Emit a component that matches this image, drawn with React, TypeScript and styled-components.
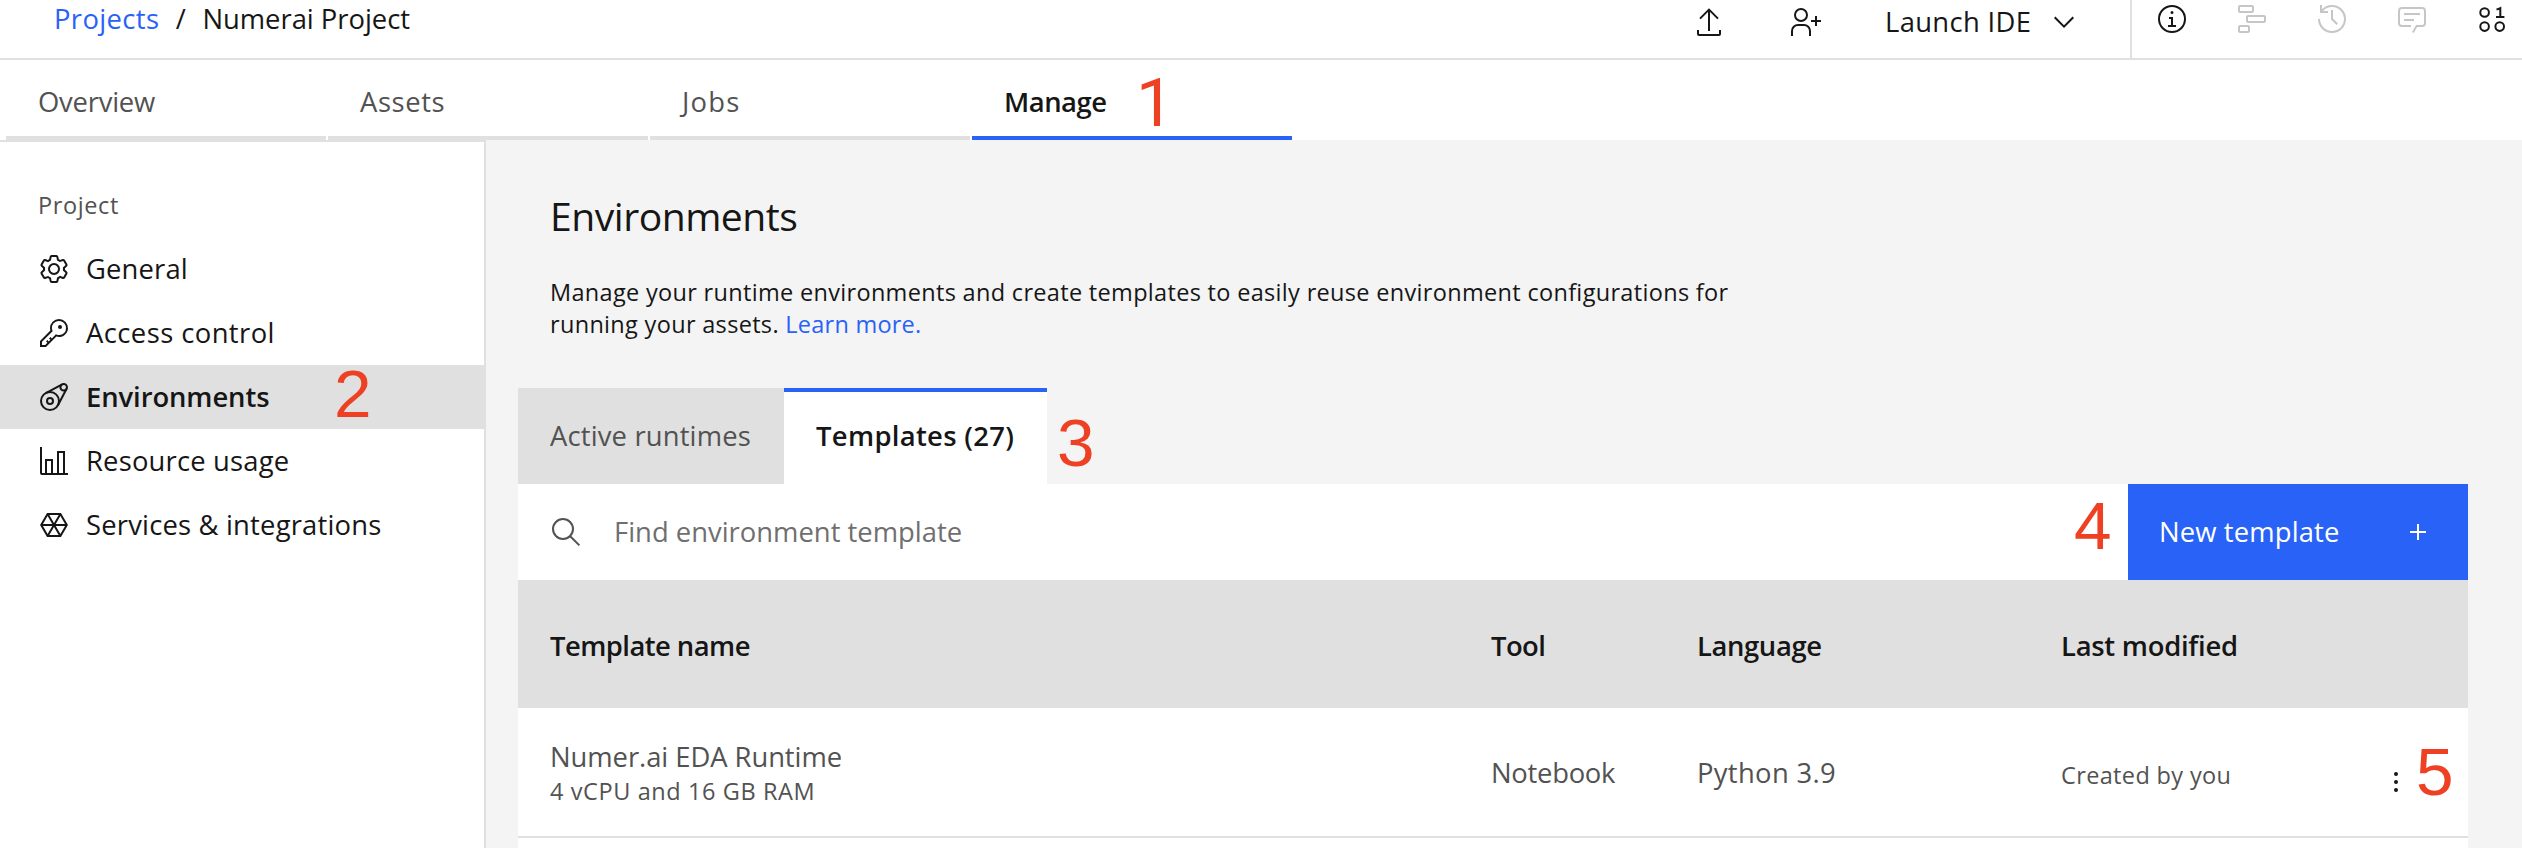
import React from "react";
import styled, { createGlobalStyle, css } from "styled-components";

const color = {
  blue: "#2962f6",
  ink: "#161616",
  secondary: "#525252",
  placeholder: "#6f6f6f",
  disabled: "#c6c6c6",
  line: "#e0e0e0",
  layer: "#f4f4f4",
  marker: "#ee4023",
};

const GlobalStyle = createGlobalStyle`
  *, *::before, *::after { box-sizing: border-box; }
  html, body { margin: 0; padding: 0; background: #fff; overflow: hidden; }
  body { font-family: "Open Sans", "Noto Sans", sans-serif; color: ${color.ink}; }
  button { border: 0; padding: 0; background: none; font: inherit; color: inherit; text-align: left; }
  h1, p { margin: 0; }
`;

/* ---------- text ---------- */

type TextProps = { $track?: number; $tone?: string; $strong?: boolean };

const textBase = css<TextProps>`
  display: block;
  white-space: nowrap;
  color: ${(p) => p.$tone ?? color.ink};
  font-weight: ${(p) => (p.$strong ? 600 : 400)};
  letter-spacing: ${(p) => p.$track ?? 0}px;
`;

const Label = styled.span<TextProps>`
  ${textBase}
  font-size: 27.4px;
  line-height: 37px;
`;

const SmallLabel = styled.span<TextProps>`
  ${textBase}
  font-size: 23.5px;
  line-height: 32px;
`;

const Title = styled.h1<TextProps>`
  ${textBase}
  font-size: 39.1px;
  line-height: 53px;
`;

/* ---------- shell ---------- */

const Page = styled.div`
  position: relative;
  display: flex;
  flex-direction: column;
  width: 2522px;
  height: 848px;
  overflow: hidden;
  background: #fff;
`;

const Header = styled.header`
  display: flex;
  align-items: flex-start;
  justify-content: space-between;
  flex: none;
  height: 60px;
  border-bottom: 2px solid ${color.line};
`;

const Breadcrumb = styled.nav`
  display: flex;
  gap: 16.5px;
  padding-left: 54px;
`;

const HeaderTools = styled.div`
  display: flex;
  height: 58px;
`;

const Actions = styled.div`
  display: flex;
  align-items: flex-start;
  gap: 64px;
  padding: 6px 50px 0 0;
`;

const LaunchButton = styled.button`
  display: flex;
  justify-content: space-between;
  width: 195px;
  height: 32px;
  ${Label} {
    margin-top: -3px;
  }
`;

const Panels = styled.div`
  display: flex;
  align-items: flex-start;
  gap: 48px;
  width: 392px;
  padding: 3px 0 0 24px;
  border-left: 2px solid ${color.line};
`;

const TabBar = styled.nav`
  display: flex;
  flex: none;
  gap: 2px;
  height: 80px;
  padding-left: 6px;
`;

const Tab = styled.button<{ $active?: boolean }>`
  display: flex;
  align-items: flex-start;
  width: 320px;
  padding: 23px 0 0 32px;
  border-bottom: 4px solid ${(p) => (p.$active ? color.blue : color.line)};
`;

const Body = styled.div`
  display: flex;
  flex: 1;
  min-height: 0;
`;

/* ---------- sidebar ---------- */

const Sidebar = styled.aside`
  flex: none;
  width: 486px;
  padding-top: 47px;
  border-top: 2px solid ${color.line};
  border-right: 2px solid ${color.line};
`;

const SidebarHeading = styled.div`
  padding: 0 0 16px 38px;
`;

const NavItem = styled.button<{ $active?: boolean }>`
  display: flex;
  align-items: center;
  gap: 16px;
  width: 100%;
  height: 64px;
  padding: 0 0 1px 38px;
  background: ${(p) => (p.$active ? color.line : "transparent")};
  svg {
    margin-top: 1px;
  }
`;

/* ---------- main ---------- */

const Main = styled.main`
  flex: 1;
  padding: 49px 54px 0 32px;
  background: ${color.layer};
`;

const Intro = styled.div`
  display: flex;
  flex-direction: column;
  gap: 34px;
  height: 199px;
  padding-left: 32px;
`;

const Description = styled.p`
  font-size: 23.5px;
  line-height: 32px;
  letter-spacing: 0.32px;
  white-space: nowrap;
`;

const Link = styled.a`
  color: ${color.blue};
  letter-spacing: 0.24px;
  text-decoration: none;
`;

const PanelTabs = styled.div`
  display: flex;
  height: 96px;
`;

const PanelTab = styled.button<{ $active?: boolean }>`
  display: flex;
  align-items: flex-start;
  width: ${(p) => (p.$active ? 263 : 266)}px;
  padding: 25px 0 0 32px;
  border-top: 4px solid ${(p) => (p.$active ? color.blue : color.line)};
  background: ${(p) => (p.$active ? "#fff" : color.line)};
`;

const Toolbar = styled.div`
  display: flex;
  height: 96px;
  background: #fff;
`;

const Search = styled.div`
  display: flex;
  flex: 1;
  align-items: center;
  gap: 32px;
  padding: 0 0 1px 32px;
  color: ${color.secondary};
  svg {
    margin-top: 1px;
  }
`;

const PrimaryButton = styled.button`
  display: flex;
  align-items: center;
  justify-content: space-between;
  width: 340px;
  padding: 0 34px 1px 31px;
  color: #fff;
  background: ${color.blue};
  svg {
    margin-top: 1px;
  }
`;

const columns = css`
  display: grid;
  grid-template-columns: 973px 206px 364px 319px 32px;
  align-items: start;
`;

const TableHead = styled.div`
  ${columns}
  height: 128px;
  padding-top: 47px;
  background: ${color.line};
`;

const TableRow = styled.div`
  ${columns}
  height: 130px;
  border-bottom: 2px solid ${color.line};
  background: #fff;
`;

const NextRow = styled.div`
  height: 10px;
  background: #fff;
`;

const Cell = styled.div<{ $top?: number; $first?: boolean }>`
  padding: ${(p) => p.$top ?? 0}px 0 0 ${(p) => (p.$first ? 32 : 0)}px;
`;

/* Numbered step markers laid over the page */
const Marker = styled.span<{ $x: number; $y: number; $face?: string }>`
  position: absolute;
  left: ${(p) => p.$x}px;
  top: ${(p) => p.$y}px;
  color: ${color.marker};
  font-family: ${(p) => p.$face ?? '"Liberation Sans"'}, sans-serif;
  font-size: 67.5px;
  line-height: 76px;
`;

/* ---------- icons (32-unit grid) ---------- */

const Glyph = styled.svg.attrs({ viewBox: "0 0 32 32", width: 32, height: 32 })<{ $tone?: string }>`
  display: block;
  flex: none;
  overflow: visible;
  color: ${(p) => p.$tone ?? "inherit"};
  fill: currentColor;
`;

const Lines = styled.g`
  fill: none;
  stroke: currentColor;
  stroke-width: 2;
`;

const UploadIcon = () => (
  <Glyph>
    <Lines>
      <path d="M5 24v4a1 1 0 0 0 1 1h20a1 1 0 0 0 1-1v-4M16 25V3.6M7 12.6l9-9 9 9" />
    </Lines>
  </Glyph>
);

const AddUserIcon = () => (
  <Glyph>
    <path d="M32 14h-4v-4h-2v4h-4v2h4v4h2v-4h4zM12 4a5 5 0 1 1-5 5 5 5 0 0 1 5-5m0-2a7 7 0 1 0 7 7 7 7 0 0 0-7-7zM22 30h-2v-5a5 5 0 0 0-5-5H9a5 5 0 0 0-5 5v5H2v-5a7 7 0 0 1 7-7h6a7 7 0 0 1 7 7z" />
  </Glyph>
);

const ChevronIcon = () => (
  <Glyph>
    <path d="M16 22 6 12l1.4-1.4 8.6 8.6 8.6-8.6L26 12z" />
  </Glyph>
);

const InfoIcon = () => (
  <Glyph>
    <path d="M17 22v-8h-4v2h2v6h-3v2h8v-2zM16 8a1.5 1.5 0 1 0 1.5 1.5A1.5 1.5 0 0 0 16 8z" />
    <path d="M16 30a14 14 0 1 1 14-14 14 14 0 0 1-14 14zm0-26a12 12 0 1 0 12 12A12 12 0 0 0 16 4z" />
  </Glyph>
);

const FlowIcon = () => (
  <Glyph $tone={color.disabled}>
    <Lines>
      <rect x="3" y="3" width="14" height="6" rx="1" />
      <rect x="11" y="13" width="18" height="6" rx="1" />
      <rect x="3" y="23" width="10" height="6" rx="1" />
    </Lines>
  </Glyph>
);

const HistoryIcon = () => (
  <Glyph $tone={color.disabled}>
    <path d="M20.59 22 15 16.41V7h2v8.58l5 5.01z" />
    <path d="M16 2A13.94 13.94 0 0 0 6 6.23V2H4v8h8V8H7.08A12 12 0 1 1 4 16H2A14 14 0 1 0 16 2z" />
  </Glyph>
);

const CommentIcon = () => (
  <Glyph $tone={color.disabled}>
    <path d="M17.74 30 16 29l4-7h6a2 2 0 0 0 2-2V8a2 2 0 0 0-2-2H6a2 2 0 0 0-2 2v12a2 2 0 0 0 2 2h9v2H6a4 4 0 0 1-4-4V8a4 4 0 0 1 4-4h20a4 4 0 0 1 4 4v12a4 4 0 0 1-4 4h-4.84z" />
    <path d="M8 10h16v2H8zM8 16h10v2H8z" />
  </Glyph>
);

const BinaryIcon = () => (
  <Glyph>
    <Lines>
      <circle cx="8.6" cy="9.5" r="4.3" />
      <circle cx="8.6" cy="23.6" r="4.3" />
      <circle cx="23.7" cy="23.6" r="4.3" />
      <path d="M20.5 6.3h1.2l2.6-1.3v9M20 14h8.4" />
    </Lines>
  </Glyph>
);

const SettingsIcon = () => (
  <Glyph>
    <path d="M27,16.76c0-.25,0-.5,0-.76s0-.51,0-.77l1.92-1.68A2,2,0,0,0,29.3,11L26.94,7a2,2,0,0,0-1.73-1,2,2,0,0,0-.64.1l-2.43.82a11.35,11.35,0,0,0-1.31-.75l-.51-2.52a2,2,0,0,0-2-1.61H13.64a2,2,0,0,0-2,1.61l-.51,2.52a11.48,11.48,0,0,0-1.32.75L7.43,6.06A2,2,0,0,0,6.79,6,2,2,0,0,0,5.06,7L2.7,11a2,2,0,0,0,.41,2.51L5,15.24c0,.25,0,.5,0,.76s0,.51,0,.77L3.11,18.45A2,2,0,0,0,2.7,21L5.06,25a2,2,0,0,0,1.73,1,2,2,0,0,0,.64-.1l2.43-.82a11.35,11.35,0,0,0,1.31.75l.51,2.52a2,2,0,0,0,2,1.61h4.72a2,2,0,0,0,2-1.61l.51-2.52a11.48,11.48,0,0,0,1.32-.75l2.42.82a2,2,0,0,0,.64.1,2,2,0,0,0,1.73-1L29.3,21a2,2,0,0,0-.41-2.51ZM25.21,24l-3.43-1.16a8.86,8.86,0,0,1-2.71,1.57L18.36,28H13.64l-.71-3.55a9.36,9.36,0,0,1-2.7-1.57L6.79,24,4.43,20l2.72-2.4a8.9,8.9,0,0,1,0-3.13L4.43,12,6.79,8l3.43,1.16a8.86,8.86,0,0,1,2.71-1.57L13.64,4h4.72l.71,3.55a9.36,9.36,0,0,1,2.7,1.57L25.21,8,27.57,12l-2.72,2.4a8.9,8.9,0,0,1,0,3.13L27.57,20Z" />
    <path d="M16,22a6,6,0,1,1,6-6A5.94,5.94,0,0,1,16,22Zm0-10a3.91,3.91,0,0,0-4,4,3.91,3.91,0,0,0,4,4,3.91,3.91,0,0,0,4-4A3.91,3.91,0,0,0,16,12Z" />
  </Glyph>
);

const KeyIcon = () => (
  <Glyph>
    <path d="M21,2a9,9,0,0,0-9,9,8.87,8.87,0,0,0,.39,2.61L2,24v6H8L18.39,19.61A9,9,0,0,0,30,11.74,9.1,9.1,0,0,0,21,2Zm0,16a7,7,0,0,1-2-.3l-1.15-.35L17,18.2l-3.18,3.18L12.41,20,11,21.41l1.38,1.38-1.59,1.59L9.41,23,8,24.41l1.38,1.38L7.17,28H4V24.83L13.8,15l.85-.85-.29-.95a7.14,7.14,0,0,1,3.4-8.44,7,7,0,0,1,10.24,6A6.69,6.69,0,0,1,21,18Z" />
    <circle cx="22" cy="10" r="2" />
  </Glyph>
);

const RuntimeIcon = () => (
  <Glyph>
    <Lines>
      <circle cx="12" cy="20" r="9" />
      <circle cx="12" cy="20" r="3" />
      <circle cx="25.7" cy="6.3" r="3.3" />
      <path d="M7.8 12.05 24.2 3.4M19.95 24.2 28.6 7.8" />
    </Lines>
  </Glyph>
);

const ChartIcon = () => (
  <Glyph>
    <path d="M27,28V6H19V28H15V14H7V28H4V2H2V28a2,2,0,0,0,2,2H30V28ZM13,28H9V16h4Zm12,0H21V8h4Z" />
  </Glyph>
);

const HexagonIcon = () => (
  <Glyph>
    <Lines>
      <path d="M9.6 5h12.8l6.4 11-6.4 11H9.6L3.2 16zM3 16h26M9.6 5l12.8 22M22.4 5 9.6 27" />
    </Lines>
  </Glyph>
);

const SearchIcon = () => (
  <Glyph>
    <Lines>
      <circle cx="13" cy="13" r="10" />
      <path d="m20.2 20.2 9.2 9.2" />
    </Lines>
  </Glyph>
);

const PlusIcon = () => (
  <Glyph>
    <path d="M17 15V8h-2v7H8v2h7v7h2v-7h7v-2z" />
  </Glyph>
);

const OverflowIcon = () => (
  <Glyph>
    <circle cx="16" cy="8" r="2" />
    <circle cx="16" cy="16" r="2" />
    <circle cx="16" cy="24" r="2" />
  </Glyph>
);

/* ---------- data ---------- */

const tabs = [
  { name: "Overview", track: -0.22 },
  { name: "Assets", track: 0.58 },
  { name: "Jobs", track: 1.2 },
  { name: "Manage", track: -0.48, active: true },
];

const navItems = [
  { name: "General", track: 0.15, Icon: SettingsIcon },
  { name: "Access control", track: 0.43, Icon: KeyIcon },
  { name: "Environments", track: -0.08, Icon: RuntimeIcon, active: true },
  { name: "Resource usage", track: 0.18, Icon: ChartIcon },
  { name: "Services & integrations", track: 0.19, Icon: HexagonIcon },
];

export default function App() {
  return (
    <Page>
      <GlobalStyle />
      <Header>
        <Breadcrumb>
          <Label as="a" $tone={color.blue} $track={0.37}>Projects</Label>
          <Label>/</Label>
          <Label $track={-0.02}>Numerai Project</Label>
        </Breadcrumb>
        <HeaderTools>
          <Actions>
            <UploadIcon />
            <AddUserIcon />
            <LaunchButton>
              <Label $track={0.34}>Launch IDE</Label>
              <ChevronIcon />
            </LaunchButton>
          </Actions>
          <Panels>
            <InfoIcon />
            <FlowIcon />
            <HistoryIcon />
            <CommentIcon />
            <BinaryIcon />
          </Panels>
        </HeaderTools>
      </Header>

      <TabBar>
        {tabs.map((t) => (
          <Tab key={t.name} $active={t.active}>
            <Label $track={t.track} $strong={t.active} $tone={t.active ? color.ink : color.secondary}>
              {t.name}
            </Label>
          </Tab>
        ))}
      </TabBar>

      <Body>
        <Sidebar>
          <SidebarHeading>
            <SmallLabel $tone={color.secondary} $track={0.62}>Project</SmallLabel>
          </SidebarHeading>
          {navItems.map(({ name, track, Icon, active }) => (
            <NavItem key={name} $active={active}>
              <Icon />
              <Label $track={track} $strong={active}>{name}</Label>
            </NavItem>
          ))}
        </Sidebar>

        <Main>
          <Intro>
            <Title $track={-0.48}>Environments</Title>
            <Description>
              Manage your runtime environments and create templates to easily reuse environment configurations for
              <br />
              running your assets. <Link>Learn more.</Link>
            </Description>
          </Intro>

          <PanelTabs>
            <PanelTab>
              <Label $tone={color.secondary} $track={0.16}>Active runtimes</Label>
            </PanelTab>
            <PanelTab $active>
              <Label $strong $track={0.33}>Templates (27)</Label>
            </PanelTab>
          </PanelTabs>

          <Toolbar>
            <Search>
              <SearchIcon />
              <Label $tone={color.placeholder} $track={0.01}>Find environment template</Label>
            </Search>
            <PrimaryButton>
              <Label $tone="#fff" $track={0.13}>New template</Label>
              <PlusIcon />
            </PrimaryButton>
          </Toolbar>

          <TableHead>
            <Cell $first><Label $strong $track={-0.54}>Template name</Label></Cell>
            <Cell><Label $strong $track={-0.54}>Tool</Label></Cell>
            <Cell><Label $strong $track={-0.37}>Language</Label></Cell>
            <Cell><Label $strong $track={-0.25}>Last modified</Label></Cell>
          </TableHead>
          <TableRow>
            <Cell $first $top={30}>
              <Label $tone={color.secondary} $track={-0.06}>Numer.ai EDA Runtime</Label>
              <SmallLabel $tone={color.secondary} $track={0.6}>4 vCPU and 16 GB RAM</SmallLabel>
            </Cell>
            <Cell $top={46}><Label $tone={color.secondary} $track={-0.27}>Notebook</Label></Cell>
            <Cell $top={46}><Label $tone={color.secondary} $track={0.33}>Python 3.9</Label></Cell>
            <Cell $top={51}><SmallLabel $tone={color.secondary} $track={0.36}>Created by you</SmallLabel></Cell>
            <Cell $top={58}><OverflowIcon /></Cell>
          </TableRow>
          <NextRow />
        </Main>
      </Body>

      <Marker $x={1136} $y={65} $face="Roboto">1</Marker>
      <Marker $x={334} $y={356}>2</Marker>
      <Marker $x={1057} $y={405}>3</Marker>
      <Marker $x={2074} $y={488}>4</Marker>
      <Marker $x={2416} $y={734}>5</Marker>
    </Page>
  );
}
